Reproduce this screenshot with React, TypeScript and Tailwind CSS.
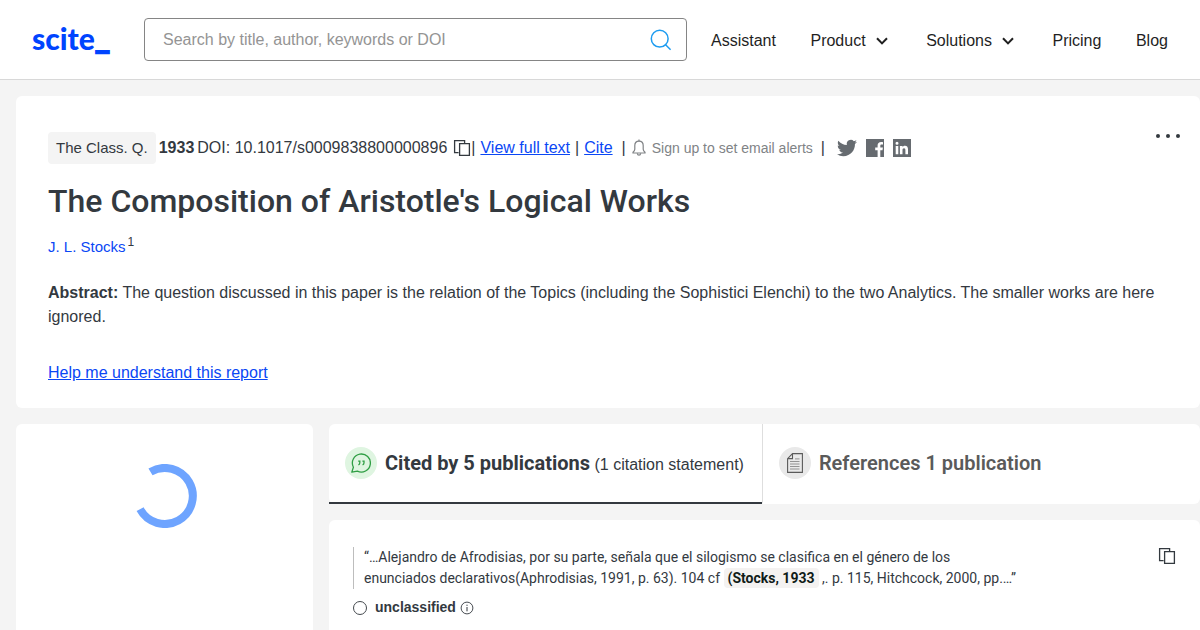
import type { ReactNode } from "react";

function CopyIcon({ className }: { className: string }) {
  return (
    <svg viewBox="0 0 18 18" fill="none" stroke="currentColor" strokeWidth="1.3" className={className} aria-hidden="true">
      <path d="M5.6 13.6H1.6V1.6H11.6V4.6" />
      <path d="M6.6 4.6H16.4V16.4H6.6Z" />
    </svg>
  );
}

function ChevronIcon() {
  return (
    <svg viewBox="0 0 12 8" fill="none" stroke="currentColor" strokeWidth="2" className="h-2 w-3" aria-hidden="true">
      <path d="M1 1.2 6 6.4l5-5.2" />
    </svg>
  );
}

function SearchIcon() {
  return (
    <svg viewBox="0 0 22 22" fill="none" stroke="currentColor" strokeWidth="1.5" className="size-[22px]" aria-hidden="true">
      <circle cx="9.7" cy="9.7" r="8.4" />
      <path d="m15.6 15.8 5 5" />
    </svg>
  );
}

function BellIcon() {
  return (
    <svg viewBox="0 0 14 18" fill="none" stroke="currentColor" strokeWidth="1.2" className="h-[18px] w-3.5" aria-hidden="true">
      <path d="M7 2.2c-2.600 0-4.200 1.900-4.200 4.400v3.600c0 1.200-.5 1.900-1.800 3v.8h12v-.8c-1.300-1.100-1.800-1.800-1.800-3V6.600C11.200 4.100 9.600 2.200 7 2.200Z" />
      <path d="M7 2.200V.6M5.300 14.200c.1 1.300.8 2 1.700 2s1.600-.7 1.700-2" />
    </svg>
  );
}

function TwitterIcon() {
  return (
    <svg viewBox="0 0 24 24" fill="currentColor" className="size-5" aria-hidden="true">
      <path d="M24 4.557a9.83 9.83 0 0 1-2.828.775 4.932 4.932 0 0 0 2.165-2.724 9.864 9.864 0 0 1-3.127 1.195 4.916 4.916 0 0 0-8.384 4.482C7.691 8.094 4.066 6.130 1.640 3.161a4.822 4.822 0 0 0-.666 2.475c0 1.710.87 3.213 2.188 4.096a4.904 4.904 0 0 1-2.228-.616v.061a4.923 4.923 0 0 0 3.946 4.827 4.996 4.996 0 0 1-2.212.085 4.937 4.937 0 0 0 4.604 3.417A9.868 9.868 0 0 1 0 19.540a13.940 13.940 0 0 0 7.548 2.212c9.142 0 14.307-7.721 13.995-14.646A10.025 10.025 0 0 0 24 4.557Z" />
    </svg>
  );
}

function FacebookIcon() {
  return (
    <svg viewBox="0 0 18 18" fill="currentColor" className="size-[18px]" aria-hidden="true">
      <path d="M0 0h18v18h-3.700v-6.700h2.200l.4-2.700h-2.600V6.900c0-.8.400-1.300 1.300-1.300h1.400V3.200c-.5-.1-1.200-.2-1.900-.2-2.200 0-3.500 1.300-3.500 3.500v2.100H9.200v2.700h2.400V18H0Z" />
    </svg>
  );
}

function LinkedinIcon() {
  return (
    <svg viewBox="0 0 18 18" fill="currentColor" fillRule="evenodd" className="size-[18px]" aria-hidden="true">
      <path d="M0 0h18v18H0ZM2.700 7v8.300h2.600V7ZM4 2.800a1.500 1.500 0 1 0 0 3 1.500 1.500 0 0 0 0-3ZM6.900 7v8.300h2.600v-4.200c0-1.200.4-1.900 1.500-1.900s1.400.8 1.400 2v4.100H15v-4.700c0-2.300-.8-3.800-3-3.800-1.200 0-2.100.6-2.500 1.300V7Z" />
    </svg>
  );
}

function QuoteBubbleIcon() {
  return (
    <svg viewBox="0 0 20 20" fill="none" stroke="currentColor" strokeWidth="1.300" className="size-5" aria-hidden="true">
      <path d="M2.400 14.200A9 9 0 1 1 6.400 18.100L.8 19.100Z" strokeLinejoin="round" />
      <path d="M7.200 8.200h1.600v1.500c0 1.200-.5 1.800-1.400 2.200M11.400 8.200H13v1.500c0 1.200-.5 1.800-1.400 2.200" strokeWidth="1.300" />
    </svg>
  );
}

function DocumentIcon() {
  return (
    <svg viewBox="0 0 16 20" fill="none" stroke="currentColor" className="h-5 w-4" aria-hidden="true">
      <path d="M5.500.6h9.900v18.800H.6V5.600ZM5.500.6v5H.6" strokeWidth="1.100" />
      <path d="M8 5.900h4.500M3 8.500h9.500M3 11h9.500M3 13.500h9.500M3 16h9.500" opacity=".6" />
    </svg>
  );
}

function InfoIcon() {
  return (
    <svg viewBox="0 0 14 14" fill="none" stroke="currentColor" className="size-3.5" aria-hidden="true">
      <circle cx="7" cy="7" r="5.900" strokeWidth=".9" />
      <path d="M7 6v4.300M7 3.700v1.200" />
    </svg>
  );
}

function Spinner() {
  return (
    <svg viewBox="0 0 64 64" fill="none" stroke="#6ea4ff" strokeWidth="8" className="size-16" role="img" aria-label="Loading">
      <path d="M17.500 7.900A28 28 0 1 1 7.100 45.200" />
    </svg>
  );
}

function NavLink({ children, menu }: { children: ReactNode; menu?: boolean }) {
  return menu ? (
    <button type="button" className="flex items-center gap-2.5 pr-1">
      {children}
      <ChevronIcon />
    </button>
  ) : (
    <a href="#">{children}</a>
  );
}

export default function App() {
  return (
    <div className="flex min-h-screen flex-col bg-[#f4f4f4] font-['Liberation_Sans',Arial,sans-serif] text-base text-[#33393f]">
      <header className="flex h-20 items-center border-b border-[#d8d8d8] bg-white px-8 text-[#1f1f1f]">
        <a href="#" className="w-28 shrink-0 pb-0.5 font-['Lato','Liberation_Sans',sans-serif] text-[30px] leading-8 font-black text-[#0044ff]">
          scite<span className="font-['Inter',sans-serif]">_</span>
        </a>
        <form className="flex h-[43px] min-w-0 flex-1 items-center rounded border border-[#858585] pr-3.5 pl-[18px]">
          <input
            aria-label="Search"
            placeholder="Search by title, author, keywords or DOI"
            className="min-w-0 flex-1 bg-transparent outline-none placeholder:text-[#949494]"
          />
          <button type="button" aria-label="Search" className="text-[#1e9cf0]">
            <SearchIcon />
          </button>
        </form>
        <nav className="ml-6 flex w-[457px] shrink-0 items-center justify-between pt-0.5">
          <NavLink>Assistant</NavLink>
          <NavLink menu>Product</NavLink>
          <NavLink menu>Solutions</NavLink>
          <NavLink>Pricing</NavLink>
          <NavLink>Blog</NavLink>
        </nav>
      </header>

      <main className="flex flex-1 flex-col gap-4 pt-4 pl-4">
        <section className="rounded-md bg-white px-8 pt-9 pb-[23px]">
          <div className="flex items-start">
            <div className="flex h-8 flex-1 items-center whitespace-nowrap">
              <span className="rounded bg-[#f4f4f4] px-2 py-1 text-[15px] leading-6">The Class. Q.</span>
              <strong className="ml-[3px]">1933</strong>
              <span className="ml-[3px]">DOI: 10.1017/s0009838800000896</span>
              <button type="button" aria-label="Copy DOI" className="ml-1.5">
                <CopyIcon className="size-[18px]" />
              </button>
              <span>|</span>
              <a href="#" className="mx-[5px] text-[#0a47f5] underline">View full text</a>
              <span>|</span>
              <a href="#" className="mx-[5px] text-[#0a47f5] underline">Cite</a>
              <span className="mx-1">|</span>
              <button type="button" className="ml-0.5 flex items-center gap-1.5 text-sm text-[#808386]">
                <BellIcon />
                Sign up to set email alerts
              </button>
              <span className="ml-2">|</span>
              <div className="ml-3 flex items-center gap-[9px] text-[#666b70]">
                <a href="#" aria-label="Twitter"><TwitterIcon /></a>
                <a href="#" aria-label="Facebook"><FacebookIcon /></a>
                <a href="#" aria-label="LinkedIn"><LinkedinIcon /></a>
              </div>
            </div>
            <button type="button" aria-label="More options" className="-mr-3">
              <svg viewBox="0 0 24 8" fill="currentColor" className="h-2 w-6" aria-hidden="true">
                <circle cx="2" cy="4" r="2" />
                <circle cx="12" cy="4" r="2" />
                <circle cx="22" cy="4" r="2" />
              </svg>
            </button>
          </div>
          <h1 className="mt-4 font-['Roboto','Liberation_Sans',sans-serif] text-[32px] leading-[42px] font-medium">The Composition of Aristotle's Logical Works</h1>
          <p className="mt-[13px] text-[15px] leading-6">
            <a href="#" className="text-[#0a47f5]">J. L. Stocks</a>
            <sup className="ml-0.5 text-xs">1</sup>
          </p>
          <p className="mt-[22px] leading-6">
            <strong>Abstract:</strong> The question discussed in this paper is the relation of the Topics (including the Sophistici Elenchi) to the two Analytics. The smaller works are here ignored.
          </p>
          <p className="mt-8 leading-6">
            <a href="#" className="text-[#0a47f5] underline">Help me understand this report</a>
          </p>
        </section>

        <div className="flex flex-1 gap-4">
          <aside className="flex w-[297px] shrink-0 justify-center rounded-t-md bg-white pt-10">
            <Spinner />
          </aside>
          <div className="flex flex-1 flex-col gap-4">
            <div className="flex h-20 rounded-md bg-white" role="tablist">
              <button type="button" role="tab" aria-selected="true" className="flex items-center gap-2 border-b-2 border-[#33393f] pr-[18px] pl-4 whitespace-nowrap">
                <span className="flex size-8 items-center justify-center rounded-full bg-[#dff5e1] text-[#2f9e44]">
                  <QuoteBubbleIcon />
                </span>
                <span><strong className="font-['Roboto','Liberation_Sans',sans-serif] text-xl font-bold">Cited by 5 publications</strong> (1 citation statement)</span>
              </button>
              <button type="button" role="tab" aria-selected="false" className="flex flex-1 items-center gap-2 border-b-2 border-l border-b-transparent border-l-[#dedede] px-4 text-[#5a5a5a]">
                <span className="flex size-8 items-center justify-center rounded-full bg-[#e9e9e9]">
                  <DocumentIcon />
                </span>
                <strong className="font-['Roboto','Liberation_Sans',sans-serif] text-xl font-semibold">References 1 publication</strong>
              </button>
            </div>
            <article className="flex flex-1 items-start justify-between rounded-t-md bg-white px-6 pt-[27px] text-sm">
              <div>
                <blockquote className="border-l border-[#bdbdbd] pl-2.5 font-['Roboto','Liberation_Sans',sans-serif] leading-[21px]">
                  “…Alejandro de Afrodisias, por su parte, señala que el silogismo se clasifica en el género de los
                  <br />
                  enunciados declarativos(Aphrodisias, 1991, p. 63). 104 cf <strong className="rounded bg-[#f4f2f1] px-1 py-0.5 text-[#101c18]">(Stocks, 1933</strong> ,. p. 115, Hitchcock, 2000, pp.…”
                </blockquote>
                <div className="mt-2 flex items-center gap-2 leading-[21px]">
                  <span className="size-3.5 rounded-full border border-[#44494e]" />
                  <span className="flex items-center gap-1">
                    <strong>unclassified</strong>
                    <button type="button" aria-label="About this classification"><InfoIcon /></button>
                  </span>
                </div>
              </div>
              <button type="button" aria-label="Copy citation statement"><CopyIcon className="size-[18px]" /></button>
            </article>
          </div>
        </div>
      </main>
    </div>
  );
}
